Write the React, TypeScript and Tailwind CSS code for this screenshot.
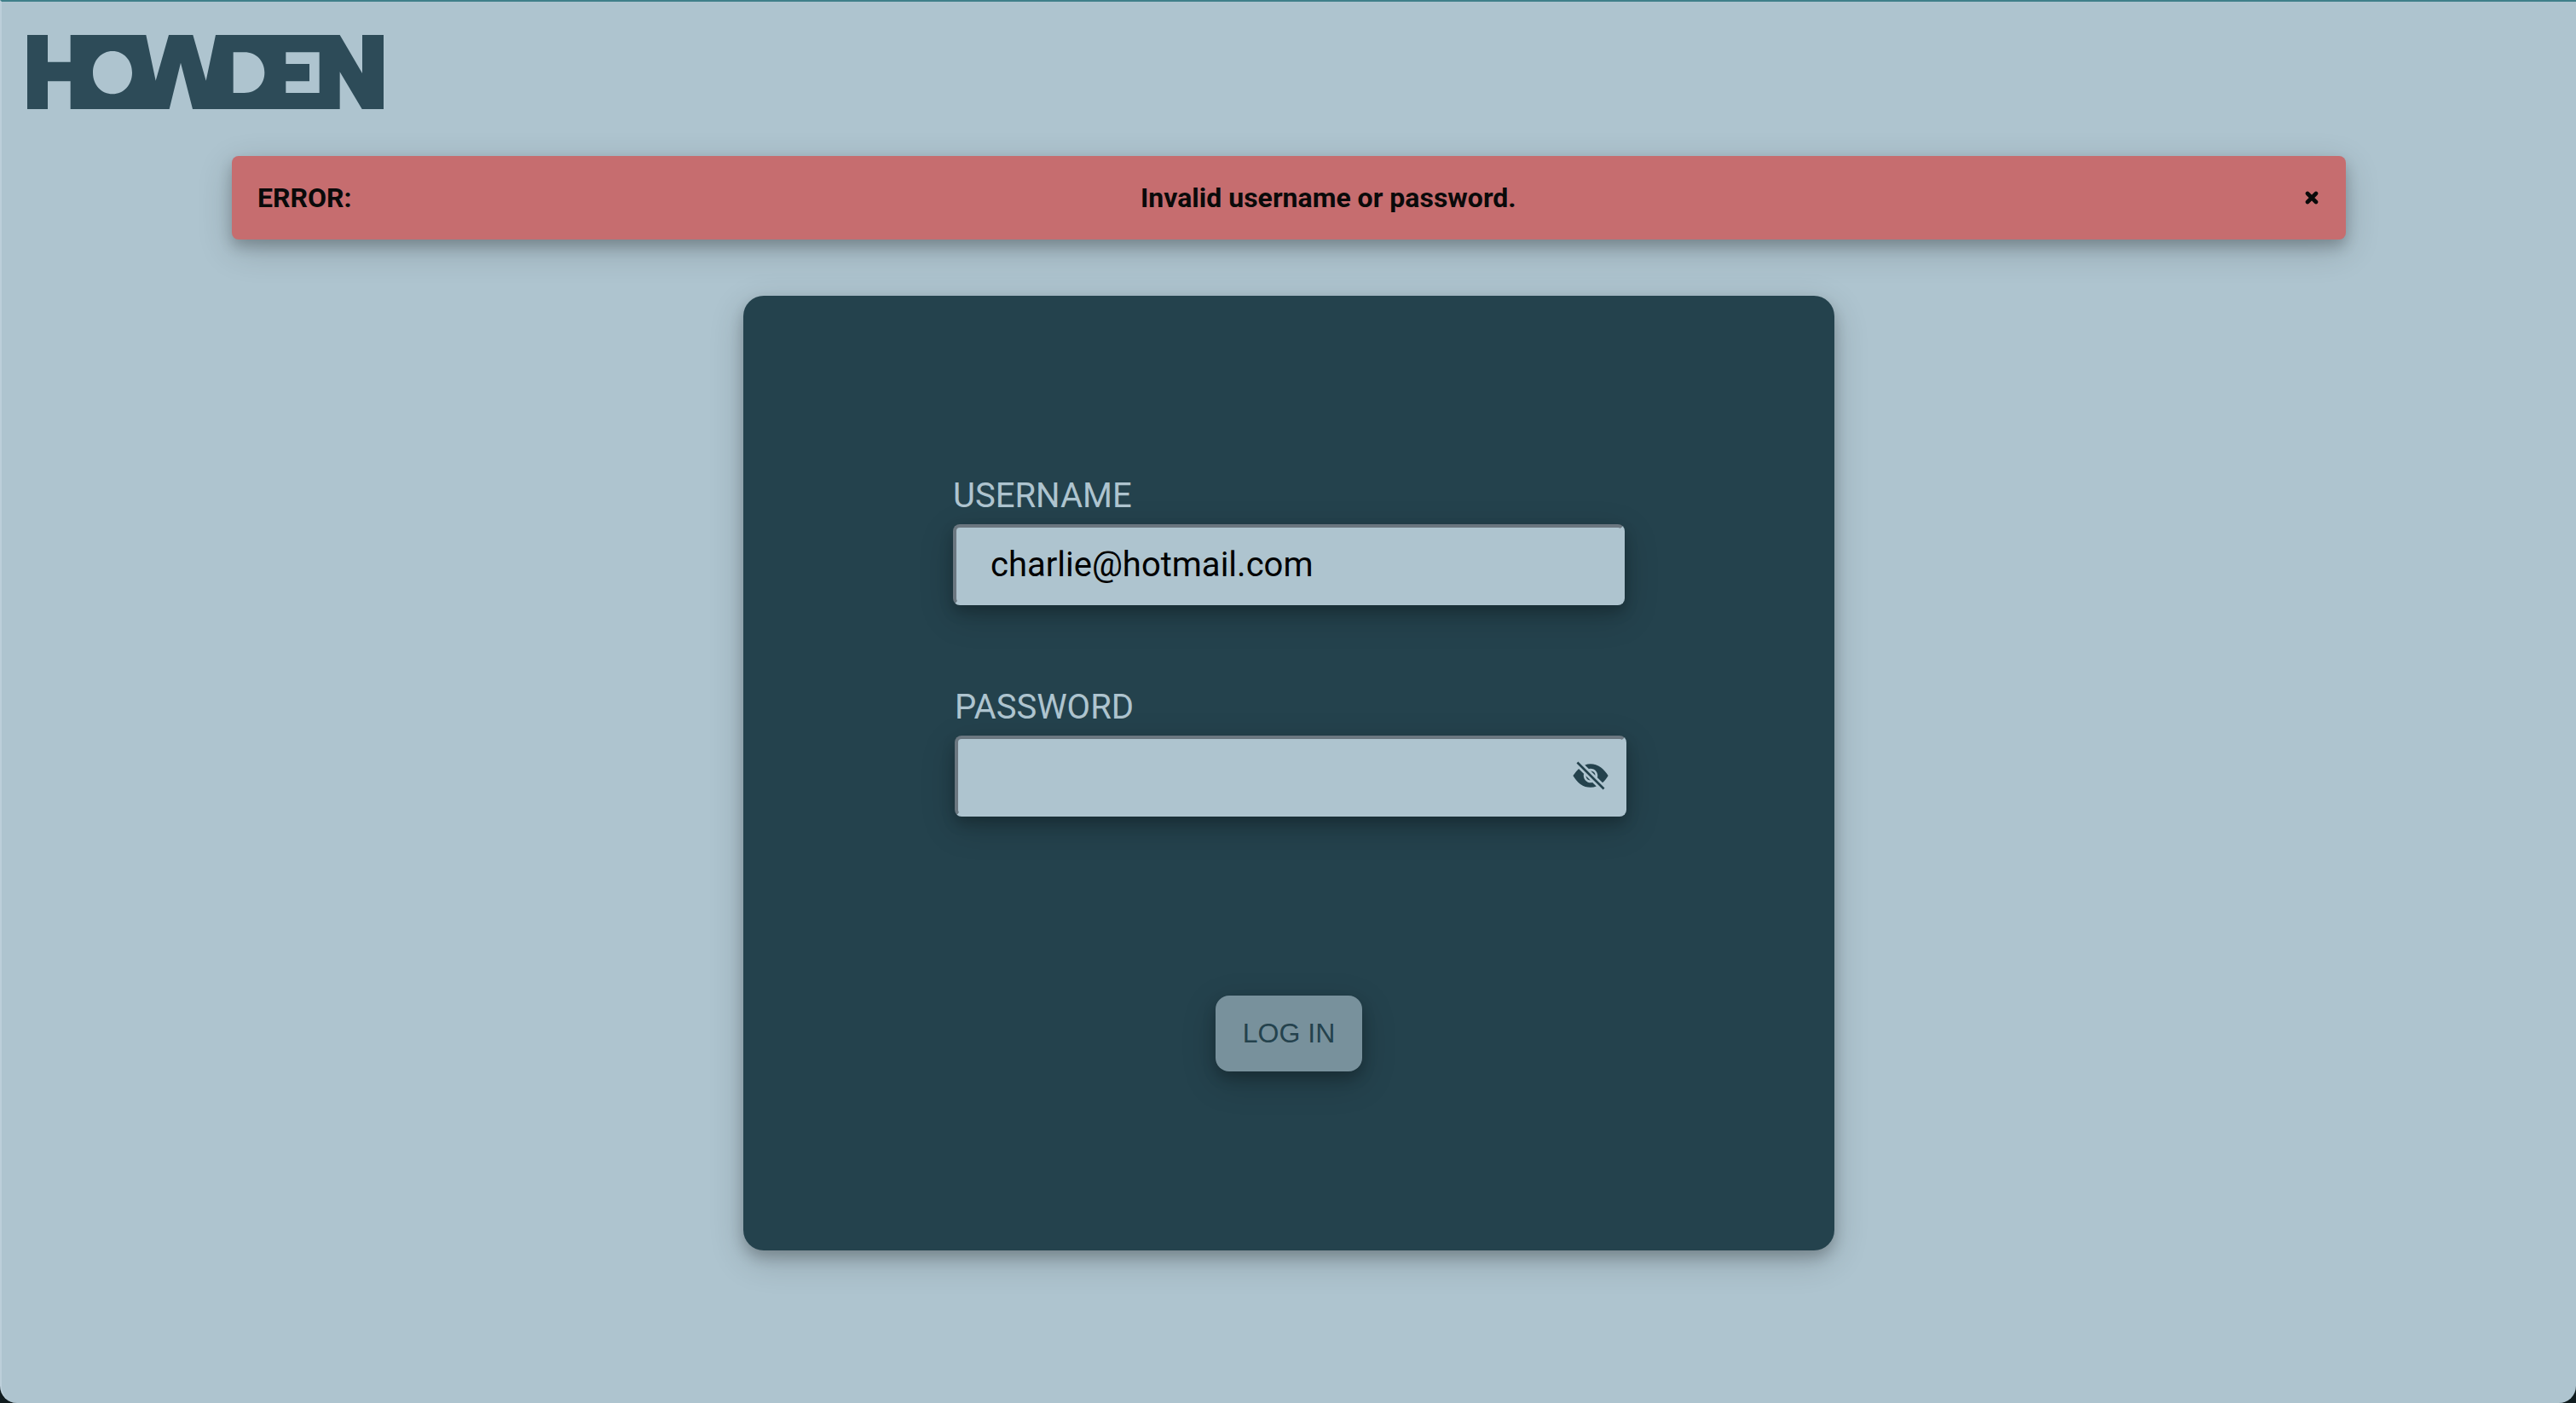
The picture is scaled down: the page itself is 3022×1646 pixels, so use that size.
import { useState } from "react";
import { IoEyeOffSharp, IoEyeSharp } from "react-icons/io5";

const fieldClass =
  "block h-[95px] w-full rounded-lg border-4 border-r-[#aec4cf] border-b-[#aec4cf] border-t-[#6b7780] border-l-[#6b7780] bg-[#aec4cf] pl-10 text-[40px] text-black outline-none shadow-[0_8px_16px_0_rgba(0,0,0,0.2),0_12px_40px_0_rgba(0,0,0,0.19)]";

function Logo() {
  return (
    <svg
      role="img"
      aria-label="Howden"
      viewBox="96 123 1254 261"
      className="block h-[87px] w-[418px]"
      fill="#2d4b58"
      fillRule="evenodd"
    >
      <path d="M96 123H168V218H248V123H514L548 284L594 123H679L725 284L759 123H1196L1275 258V123H1350V384H1274L1196 253V384H678L636 221L596 384H248V286H168V384H96ZM396 180C357 180 327 212 327 256S357 331 396 331S465 300 465 256S435 180 396 180ZM821 184V327H860C902 327 931 297 931 256S902 184 860 184ZM1006 184V225H1089V286H1006V327H1124V184Z" />
    </svg>
  );
}

function ErrorBanner({ onClose }: { onClose: () => void }) {
  return (
    <div
      role="alert"
      className="mx-auto mt-[55px] flex h-[98px] w-full max-w-[2480px] items-center justify-between rounded-lg bg-[#c66d6f] pr-8 pl-[30px] text-[32px] font-bold text-[#0a0a0a] shadow-[0_8px_16px_0_rgba(0,0,0,0.2),0_12px_40px_0_rgba(0,0,0,0.19)]"
    >
      <span>ERROR:</span>
      <span>Invalid username or password.</span>
      <button type="button" aria-label="Close" onClick={onClose}>
        <svg viewBox="0 0 16 16" className="block size-4" stroke="currentColor" strokeWidth="4.6" strokeLinecap="round">
          <path d="M3 3L13 13M13 3L3 13" />
        </svg>
      </button>
    </div>
  );
}

export default function App() {
  const [showError, setShowError] = useState(true);
  const [visible, setVisible] = useState(false);

  return (
    <div className="min-h-screen bg-[#101c1f] font-[Roboto,sans-serif]">
      <div className="min-h-screen rounded-b-[20px] border-t-2 border-l-2 border-t-[#3f808a] border-l-[#bccfda] bg-[#aec4cf]">
        <header className="px-[30px] pt-[39px]">
          <Logo />
        </header>
        <main>
          {showError && <ErrorBanner onClose={() => setShowError(false)} />}
          <form
            onSubmit={(e) => e.preventDefault()}
            className="mx-auto mt-[66px] flex w-full max-w-[1280px] flex-col items-center rounded-3xl bg-[#24424d] py-[210px] shadow-[0_8px_16px_0_rgba(0,0,0,0.2),0_12px_40px_0_rgba(0,0,0,0.19)]"
          >
            <div className="w-[788px]">
              <label htmlFor="username" className="mb-2 block text-[40px] leading-[50px] text-[#aec4cf]">
                USERNAME
              </label>
              <input id="username" type="text" defaultValue="charlie@hotmail.com" className={fieldClass} />
            </div>
            <div className="mt-[95px] w-[792px] pl-1">
              <label htmlFor="password" className="mb-2 block text-[40px] leading-[50px] text-[#aec4cf]">
                PASSWORD
              </label>
              <div className="relative">
                <input id="password" type={visible ? "text" : "password"} className={fieldClass} />
                <button
                  type="button"
                  aria-label="Toggle password visibility"
                  onClick={() => setVisible(!visible)}
                  className="absolute inset-y-0 right-5 flex items-center pb-0.5 text-[#24424d]"
                >
                  {visible ? <IoEyeSharp className="size-11" /> : <IoEyeOffSharp className="size-11" />}
                </button>
              </div>
            </div>
            <button
              type="submit"
              className="mt-[210px] h-[89px] rounded-2xl bg-[#78919c] px-8 pb-0.5 font-['Liberation_Sans',Arial,sans-serif] text-[32px] text-[#24424d] shadow-[0_8px_16px_0_rgba(0,0,0,0.2),0_12px_40px_0_rgba(0,0,0,0.19)]"
            >
              LOG IN
            </button>
          </form>
        </main>
      </div>
    </div>
  );
}
